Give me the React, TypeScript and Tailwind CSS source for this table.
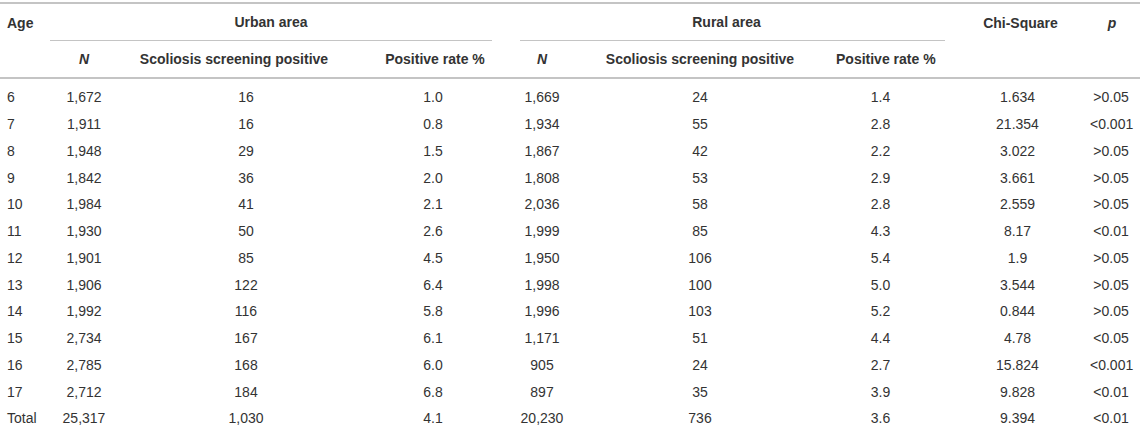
const COLS = "grid grid-cols-[50px_68px_256px_118px_28px_44px_272px_109px_145px_50px]"

type Row = [string, string, string, string, string, string, string, string, string]

const ROWS: Row[] = [
  ["6", "1,672", "16", "1.0", "1,669", "24", "1.4", "1.634", ">0.05"],
  ["7", "1,911", "16", "0.8", "1,934", "55", "2.8", "21.354", "<0.001"],
  ["8", "1,948", "29", "1.5", "1,867", "42", "2.2", "3.022", ">0.05"],
  ["9", "1,842", "36", "2.0", "1,808", "53", "2.9", "3.661", ">0.05"],
  ["10", "1,984", "41", "2.1", "2,036", "58", "2.8", "2.559", ">0.05"],
  ["11", "1,930", "50", "2.6", "1,999", "85", "4.3", "8.17", "<0.01"],
  ["12", "1,901", "85", "4.5", "1,950", "106", "5.4", "1.9", ">0.05"],
  ["13", "1,906", "122", "6.4", "1,998", "100", "5.0", "3.544", ">0.05"],
  ["14", "1,992", "116", "5.8", "1,996", "103", "5.2", "0.844", ">0.05"],
  ["15", "2,734", "167", "6.1", "1,171", "51", "4.4", "4.78", "<0.05"],
  ["16", "2,785", "168", "6.0", "905", "24", "2.7", "15.824", "<0.001"],
  ["17", "2,712", "184", "6.8", "897", "35", "3.9", "9.828", "<0.01"],
  ["Total", "25,317", "1,030", "4.1", "20,230", "736", "3.6", "9.394", "<0.01"],
]

export default function App() {
  return (
    <div className="h-[430px] w-[1143px] overflow-hidden bg-white pt-[2px] font-['Liberation_Sans',Arial,sans-serif] text-[14px] leading-5 text-[#333]">
      <div className="w-[1140px] border-t-2 border-[#c4c4c4]">
        {/* group header */}
        <div className={`${COLS} h-[37px] font-bold`}>
          <div className="flex items-center pl-[7px]">Age</div>
          <div className="col-span-3 flex items-center justify-center border-b border-[#c4c4c4]">Urban area</div>
          <div />
          <div className="col-span-3 flex items-center justify-center border-b border-[#c4c4c4] pr-[12px]">Rural area</div>
          <div className="flex items-center justify-center pl-[6px]">Chi-Square</div>
          <div className="flex items-center justify-center pr-[6px] italic">p</div>
        </div>

        {/* sub header */}
        <div className={`${COLS} h-[38px] items-center whitespace-nowrap border-b-2 border-[#c4c4c4] font-bold`}>
          <div />
          <div className="text-center italic">N</div>
          <div className="pr-[24px] text-center">Scoliosis screening positive</div>
          <div className="pl-[4px] text-center">Positive rate %</div>
          <div />
          <div className="text-center italic">N</div>
          <div className="text-center">Scoliosis screening positive</div>
          <div className="pr-[16px] text-center">Positive rate %</div>
          <div />
          <div />
        </div>

        {/* body */}
        <div className="pt-[5px]">
          {ROWS.map((r) => (
            <div key={r[0]} className={`${COLS} h-[26.75px] items-center`}>
              <div className="pl-[7px]">{r[0]}</div>
              <div className="text-center">{r[1]}</div>
              <div className="text-center">{r[2]}</div>
              <div className="text-center">{r[3]}</div>
              <div />
              <div className="text-center">{r[4]}</div>
              <div className="text-center">{r[5]}</div>
              <div className="pr-[20px] text-center">{r[6]}</div>
              <div className="text-center">{r[7]}</div>
              <div className="pr-[8px] text-center">{r[8]}</div>
            </div>
          ))}
        </div>
      </div>
    </div>
  )
}
